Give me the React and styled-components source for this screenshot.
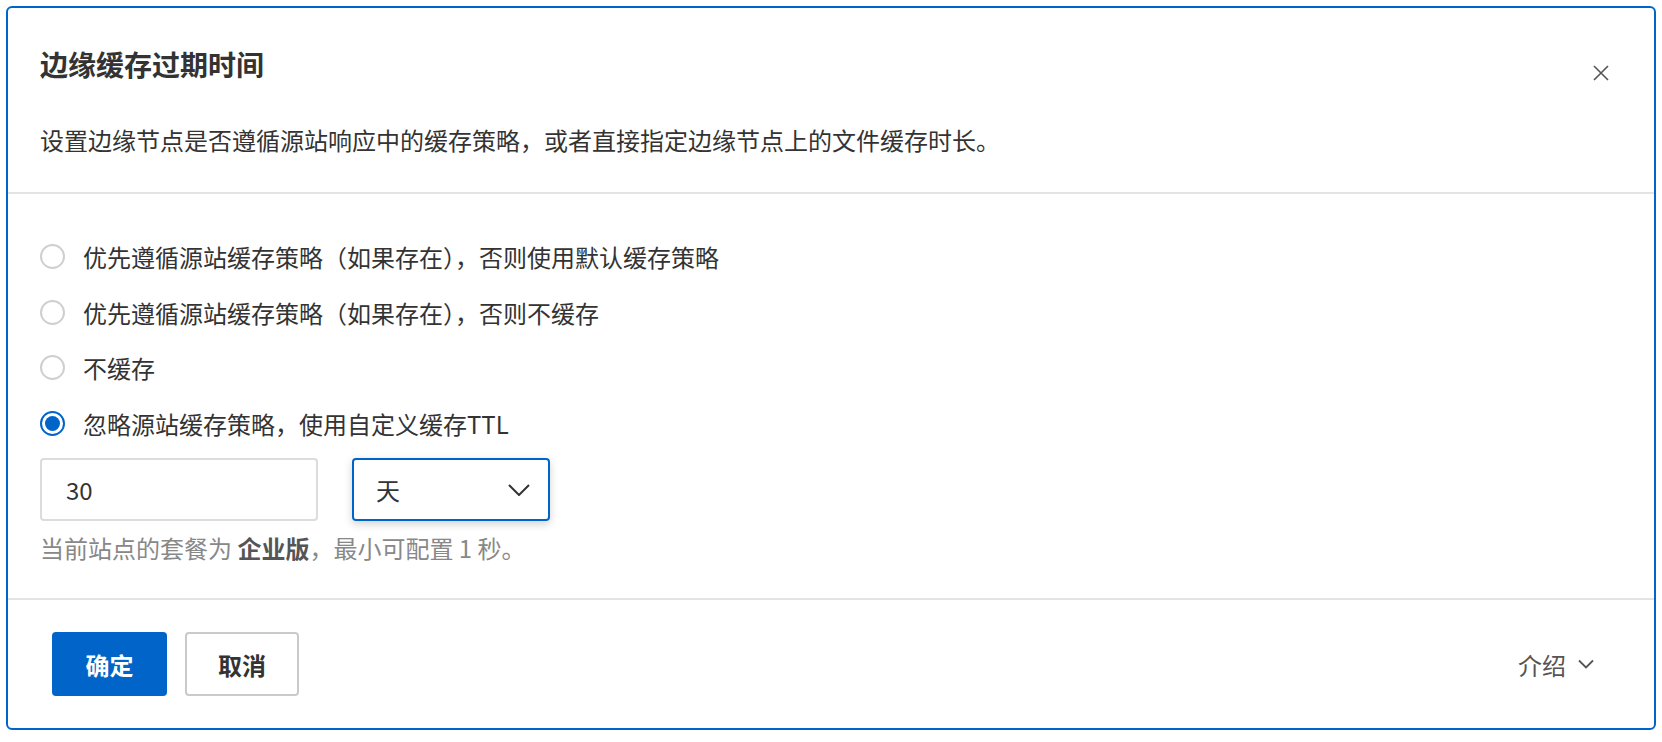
import styled, { createGlobalStyle } from 'styled-components';

const GlobalStyle = createGlobalStyle`
  html, body {
    margin: 0;
    padding: 0;
    background: #fff;
  }
  body {
    font-family: "Noto Sans CJK SC", "Noto Sans", sans-serif;
    color: #333;
  }
  * { box-sizing: border-box; }
`;

const Page = styled.div`
  padding: 6px;
  width: 1662px;
  height: 742px;
`;

const Card = styled.div`
  width: 1650px;
  height: 724px;
  border: 2px solid #0064c8;
  border-radius: 6px;
  display: flex;
  flex-direction: column;
  background: #fff;
  overflow: hidden;
`;

const Header = styled.div`
  height: 186px;
  padding: 36px 41px 0 32px;
  border-bottom: 2px solid #e3e3e3;
`;

const TitleRow = styled.div`
  display: flex;
  justify-content: space-between;
  align-items: flex-start;
`;

const Title = styled.h2`
  margin: 0;
  font-size: 28px;
  line-height: 40px;
  font-weight: 700;
  color: #333;
`;

const Close = styled.button`
  margin-top: 17px;
  width: 24px;
  height: 24px;
  padding: 0;
  border: none;
  background: none;
  display: flex;
  align-items: center;
  justify-content: center;
  color: #555;
`;

const Description = styled.p`
  margin: 37px 0 0;
  font-size: 24px;
  line-height: 36px;
  color: #333;
`;

const Body = styled.div`
  height: 404px;
  padding: 35px 32px 0;
`;

const RadioRow = styled.label`
  display: flex;
  align-items: center;
  height: 55.5px;
  font-size: 24px;
  color: #333;
  gap: 18px;
`;

const RadioCircle = styled.span`
  width: 25px;
  height: 25px;
  border-radius: 50%;
  border: 2px solid ${p => (p.checked ? '#0064c8' : '#cfcfcf')};
  display: flex;
  align-items: center;
  justify-content: center;
  flex-shrink: 0;
  &::after {
    content: '';
    display: ${p => (p.checked ? 'block' : 'none')};
    width: 15px;
    height: 15px;
    border-radius: 50%;
    background: #0064c8;
  }
`;

const Inputs = styled.div`
  display: flex;
  gap: 34px;
  margin-top: 7px;
`;

const TextInput = styled.div`
  width: 278px;
  height: 63px;
  border: 2px solid #dcdcdc;
  border-radius: 4px;
  padding: 0 24px;
  display: flex;
  align-items: center;
  font-size: 24px;
  color: #333;
`;

const Select = styled.div`
  width: 198px;
  height: 63px;
  border: 2px solid #0064c8;
  border-radius: 4px;
  padding: 0 18px 0 22px;
  display: flex;
  align-items: center;
  justify-content: space-between;
  font-size: 24px;
  color: #333;
  box-shadow: 0 3px 8px rgba(0, 0, 0, 0.18);
`;

const Hint = styled.p`
  margin: 9px 0 0;
  font-size: 24px;
  line-height: 36px;
  color: #888;
  b {
    color: #555;
    font-weight: 700;
  }
`;

const Footer = styled.div`
  height: 130px;
  border-top: 2px solid #e3e3e3;
  padding: 0 60px 0 44px;
  display: flex;
  align-items: center;
  justify-content: space-between;
`;

const Buttons = styled.div`
  display: flex;
  gap: 18px;
`;

const Button = styled.button`
  width: ${p => p.w}px;
  height: 64px;
  border-radius: 4px;
  font-family: inherit;
  font-size: 24px;
  font-weight: 700;
  border: 2px solid ${p => (p.primary ? '#0064c8' : '#cacaca')};
  background: ${p => (p.primary ? '#0064c8' : '#fff')};
  color: ${p => (p.primary ? '#fff' : '#333')};
`;

const Intro = styled.div`
  display: flex;
  align-items: center;
  gap: 12px;
  font-size: 24px;
  color: #555;
`;

const options = [
  '优先遵循源站缓存策略（如果存在），否则使用默认缓存策略',
  '优先遵循源站缓存策略（如果存在），否则不缓存',
  '不缓存',
  '忽略源站缓存策略，使用自定义缓存TTL',
];

export default function App() {
  return (
    <>
      <GlobalStyle />
      <Page>
        <Card>
          <Header>
            <TitleRow>
              <Title>边缘缓存过期时间</Title>
              <Close>
                <svg width="16" height="16" viewBox="0 0 16 16">
                  <path d="M1 1L15 15M15 1L1 15" stroke="currentColor" strokeWidth="1.6" fill="none" />
                </svg>
              </Close>
            </TitleRow>
            <Description>设置边缘节点是否遵循源站响应中的缓存策略，或者直接指定边缘节点上的文件缓存时长。</Description>
          </Header>
          <Body>
            {options.map((o, i) => (
              <RadioRow key={i}>
                <RadioCircle checked={i === 3} />
                {o}
              </RadioRow>
            ))}
            <Inputs>
              <TextInput>30</TextInput>
              <Select>
                <span>天</span>
                <svg width="22" height="12" viewBox="0 0 22 12">
                  <path d="M1 1L11 11L21 1" stroke="#333" strokeWidth="2" fill="none" />
                </svg>
              </Select>
            </Inputs>
            <Hint>
              当前站点的套餐为 <b>企业版</b>，最小可配置 1 秒。
            </Hint>
          </Body>
          <Footer>
            <Buttons>
              <Button primary w={115}>确定</Button>
              <Button w={114}>取消</Button>
            </Buttons>
            <Intro>
              介绍
              <svg width="16" height="10" viewBox="0 0 16 10">
                <path d="M1 1.5L8 8.5L15 1.5" stroke="#555" strokeWidth="1.8" fill="none" />
              </svg>
            </Intro>
          </Footer>
        </Card>
      </Page>
    </>
  );
}
